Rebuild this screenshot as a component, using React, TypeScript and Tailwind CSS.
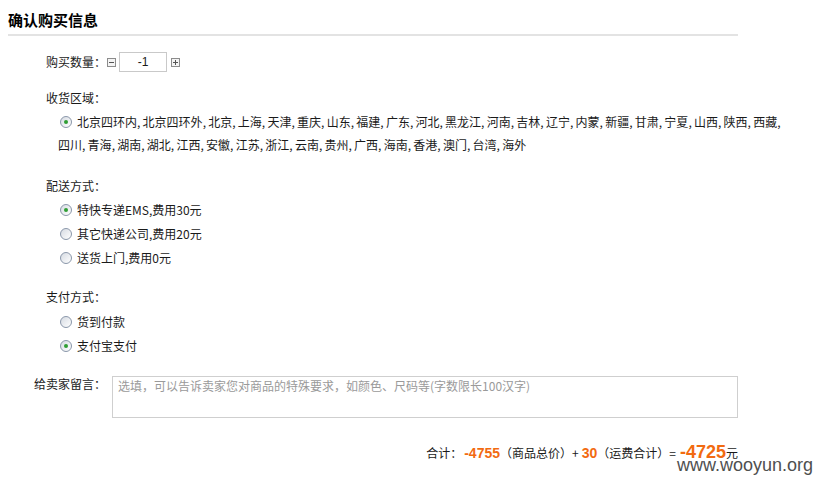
import type { ReactNode } from "react";

const regionLine1 = [
  "北京四环内", "北京四环外", "北京", "上海", "天津", "重庆", "山东", "福建", "广东", "河北",
  "黑龙江", "河南", "吉林", "辽宁", "内蒙", "新疆", "甘肃", "宁夏", "山西", "陕西", "西藏",
];
const regionLine2 = [
  "四川", "青海", "湖南", "湖北", "江西", "安徽", "江苏", "浙江", "云南", "贵州",
  "广西", "海南", "香港", "澳门", "台湾", "海外",
];

function Comma() {
  return <span className="inline-block w-[5.6px]">,</span>;
}

function Radio({ checked = false }: { checked?: boolean }) {
  return (
    <span className="inline-flex h-[12px] w-[12px] shrink-0 items-center justify-center rounded-full border border-[#8a97aa] bg-gradient-to-br from-[#d6dbe2] to-white align-middle">
      {checked ? <span className="h-[4px] w-[4px] rounded-full bg-[#2f9e33]" /> : null}
    </span>
  );
}

function Option({ checked, children }: { checked?: boolean; children: ReactNode }) {
  return (
    <div className="flex h-[24px] items-center pl-[14px]">
      <Radio checked={checked} />
      <span className="ml-[5px]">{children}</span>
    </div>
  );
}

function StepButton({ plus }: { plus?: boolean }) {
  return (
    <svg width="9" height="9" viewBox="0 0 9 9" className="shrink-0">
      <rect x="0.5" y="0.5" width="8" height="8" fill="#f4f4f4" stroke="#8c8c8c" />
      <path d="M2 4.5h5" stroke="#555" />
      {plus ? <path d="M4.5 2v5" stroke="#555" /> : null}
    </svg>
  );
}

function Label({ children }: { children: ReactNode }) {
  return <div className="h-[20px] leading-[20px]">{children}</div>;
}

export default function App() {
  return (
    <div className="relative h-[477px] w-[814px] overflow-hidden bg-white font-['Noto_Sans_CJK_SC',sans-serif] text-[12px] text-[#1a1a1a]">
      <div className="ml-[8px] w-[730px] border-b-2 border-[#e3e3e3] pb-[4px] pt-[10px] text-[15px] font-bold leading-[20px] text-black">
        确认购买信息
      </div>

      <div className="pl-[46px]">
        <div className="mt-[16px] flex h-[20px] items-center">
          <span>购买数量：</span>
          <span className="ml-[1px]">
            <StepButton />
          </span>
          <div className="ml-[3px] flex h-[20px] w-[48px] items-center justify-center border border-[#c9c9c9] font-['Liberation_Sans',sans-serif]">
            -1
          </div>
          <span className="ml-[4px]">
            <StepButton plus />
          </span>
        </div>

        <div className="mt-[16px]">
          <Label>收货区域：</Label>
        </div>
        <div className="mt-[2px] pl-[12px] leading-[23px]">
          <div className="flex items-center">
            <span className="ml-[2px] mr-[5px] inline-flex">
              <Radio checked />
            </span>
            <span>
              {regionLine1.map((r) => (
                <span key={r}>
                  {r}
                  <Comma />
                </span>
              ))}
            </span>
          </div>
          <div>
            {regionLine2.map((r, i) => (
              <span key={r}>
                {r}
                {i < regionLine2.length - 1 ? <Comma /> : null}
              </span>
            ))}
          </div>
        </div>

        <div className="mt-[20px]">
          <Label>配送方式：</Label>
        </div>
        <div className="mt-[2px]">
          <Option checked>特快专递EMS,费用30元</Option>
          <Option>其它快递公司,费用20元</Option>
          <Option>送货上门,费用0元</Option>
        </div>

        <div className="mt-[17px]">
          <Label>支付方式：</Label>
        </div>
        <div className="mt-[3px]">
          <Option>货到付款</Option>
          <Option checked>支付宝支付</Option>
        </div>
      </div>

      <div className="ml-[8px] mt-[18px] flex w-[730px]">
        <div className="w-[98px] pt-[-2px] text-right leading-[16px]">给卖家留言：</div>
        <div className="ml-[6px] h-[42px] flex-1 border border-[#cfcfcf] px-[5px] py-[1px] leading-[16px] text-[#9a9a9a]">
          选填，可以告诉卖家您对商品的特殊要求，如颜色、尺码等(字数限长100汉字)
        </div>
      </div>

      <div className="ml-[8px] mt-[21px] flex w-[730px] items-baseline justify-end">
        <span>合计：</span>
        <span className="ml-[2px] font-['Liberation_Sans',sans-serif] text-[14px] font-bold text-[#f26a10]">-4755</span>
        <span>（商品总价）+</span>
        <span className="ml-[3px] font-['Liberation_Sans',sans-serif] text-[14px] font-bold text-[#f26a10]">30</span>
        <span>（运费合计）=</span>
        <span className="ml-[4px] font-['Liberation_Sans',sans-serif] text-[18px] font-bold text-[#f26a10]">-4725</span>
        <span>元</span>
      </div>

      <div className="absolute bottom-[2px] right-[1px] font-['Liberation_Sans',sans-serif] text-[18px] leading-[20px] text-[#4f4f4f]">
        www.wooyun.org
      </div>
    </div>
  );
}
